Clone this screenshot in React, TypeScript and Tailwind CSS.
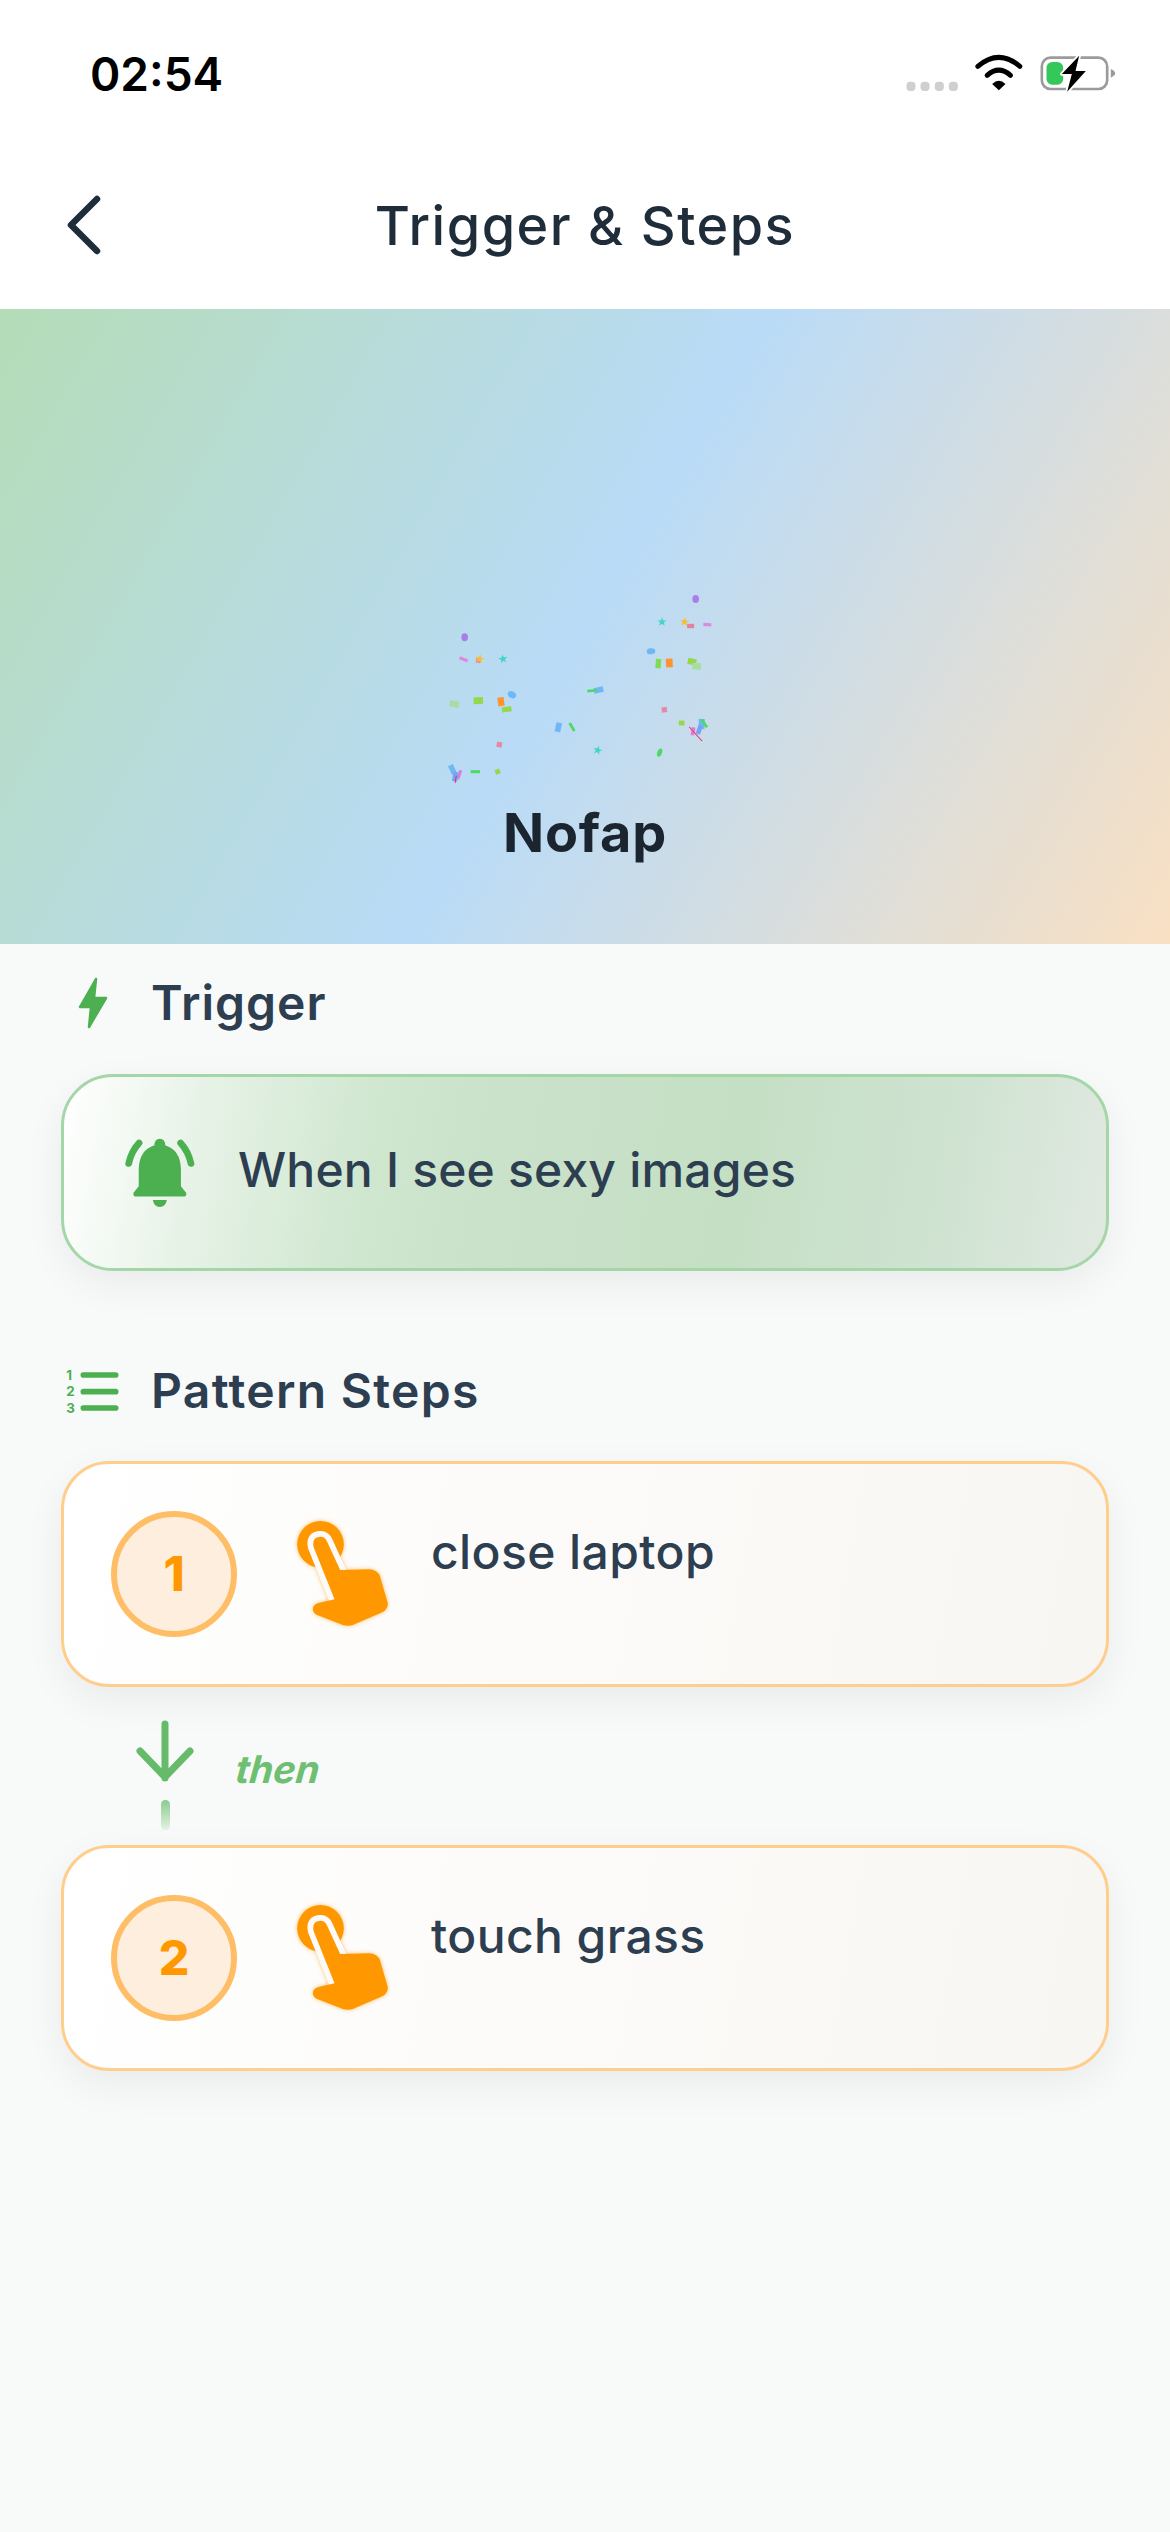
import React from "react";

const inter = "font-['Inter','Noto_Sans',sans-serif]";

// status bar icons: dots, wifi, charging battery
const StatusIcons = () => (
  <svg width="217" height="40" viewBox="70 40 650 120" fill="none">
    {[80, 122, 165, 207].map((x) => (
      <rect key={x} x={x} y="126" width="27" height="28" rx="11" fill="#cfcfcf" />
    ))}
    <path d="M294 80 Q357 26 420 80" stroke="#000" strokeWidth="15" strokeLinecap="round" />
    <path d="M322 107 Q357 76 392 107" stroke="#000" strokeWidth="15" strokeLinecap="round" />
    <path d="M337 133 Q357 114 377 133 L357 152 Z" fill="#000" />
    <rect x="486" y="54" width="196" height="94" rx="26" stroke="#9b9b9b" strokeWidth="8" />
    <path d="M693 88 Q706 94 706 101 Q706 108 693 114 Z" fill="#9b9b9b" />
    <rect x="500" y="67" width="50" height="68" rx="17" fill="#34c759" />
    <path d="M598 48 L546 103 L576 103 L562 156 L618 94 L587 94 Z" fill="#000" stroke="#fff" strokeWidth="11" strokeLinejoin="round" paintOrder="stroke" />
  </svg>
);

const Chevron = () => (
  <svg width="36" height="60" viewBox="0 0 36 60" fill="none">
    <path d="M31 4 L5 30 L31 56" stroke="#1f2d3a" strokeWidth="6.5" strokeLinecap="round" strokeLinejoin="round" />
  </svg>
);

// confetti specks, coordinates are 3x of the real pixels
const Confetti = () => {
  const rects: [number, number, number, number, number, string][] = [
    [131, 268, 26, 10, 22, "#dc8ae0"],
    [175, 272, 14, 14, 10, "#e88aa8"],
    [103, 402, 28, 18, 12, "#a9dca0"],
    [175, 392, 28, 20, -3, "#93d94a"],
    [243, 395, 19, 26, -8, "#ff9330"],
    [260, 418, 29, 15, -8, "#93d94a"],
    [238, 524, 16, 16, 10, "#e58aa6"],
    [415, 472, 17, 28, 12, "#6fb8f5"],
    [456, 471, 8, 28, -30, "#4cd964"],
    [536, 360, 28, 17, -12, "#6fb8f5"],
    [516, 362, 28, 8, -5, "#4cd964"],
    [166, 605, 28, 9, 0, "#4cd964"],
    [233, 605, 15, 15, -20, "#93d94a"],
    [97, 598, 16, 28, -25, "#6fb8f5"],
    [118, 614, 9, 28, 18, "#dc7ae0"],
    [106, 620, 16, 28, 10, "#7ba4f0"],
    [107, 628, 3, 22, 10, "#d6336c"],
    [812, 168, 21, 13, 0, "#e580a0"],
    [862, 164, 24, 10, 3, "#dc8ae0"],
    [715, 281, 16, 28, 5, "#7fdb4f"],
    [748, 279, 20, 26, -3, "#ff9330"],
    [816, 275, 26, 19, 12, "#93d94a"],
    [830, 289, 26, 20, 4, "#a9dca0"],
    [733, 419, 16, 16, -8, "#e58aa6"],
    [785, 459, 17, 14, 3, "#93d94a"],
    [845, 462, 18, 30, 3, "#6fb8f5"],
    [853, 460, 8, 28, -35, "#4cd964"],
    [838, 479, 14, 28, 20, "#7ba4f0"],
    [819, 484, 11, 24, 10, "#e878d8"],
    [827, 492, 3, 58, -42, "#e0447a"],
  ];
  const ovals: [number, number, number, number, number, string][] = [
    [134, 202, 10, 12, 0, "#a87fe8"],
    [276, 374, 13, 10, 25, "#6fb8f5"],
    [827, 87, 10, 12, 0, "#a87fe8"],
    [693, 244, 13, 9, -5, "#6fb8f5"],
    [719, 548, 7, 13, 20, "#4cd964"],
  ];
  const star = "M0 -14 L3.5 -4.5 L13.5 -4.5 L5.5 1.8 L8.5 11.5 L0 5.5 L-8.5 11.5 L-5.5 1.8 L-13.5 -4.5 L-3.5 -4.5 Z";
  const stars: [number, number, number, string][] = [
    [179, 267, 10, "#f5c030"],
    [249, 267, -10, "#3fd4cc"],
    [533, 541, 15, "#3fd4cc"],
    [726, 156, 0, "#3fd4cc"],
    [794, 156, 8, "#f5c030"],
  ];
  return (
    <svg className="absolute left-[420px] top-[261px]" width="320" height="220" viewBox="0 0 960 660">
      {rects.map(([x, y, w, h, r, c], i) => (
        <rect key={i} x={x - w / 2} y={y - h / 2} width={w} height={h} fill={c} transform={`rotate(${r} ${x} ${y})`} />
      ))}
      {ovals.map(([x, y, rx, ry, r, c], i) => (
        <ellipse key={i} cx={x} cy={y} rx={rx} ry={ry} fill={c} transform={`rotate(${r} ${x} ${y})`} />
      ))}
      {stars.map(([x, y, r, c], i) => (
        <path key={i} d={star} fill={c} transform={`translate(${x} ${y}) rotate(${r})`} />
      ))}
    </svg>
  );
};

const Bolt = () => (
  <svg width="30" height="52" viewBox="0 0 30 52" fill="#4caf50">
    <path d="M18 2 L2 30 L13 30 L11 50 L28 21 L16 21 Z" stroke="#4caf50" strokeWidth="2.5" strokeLinejoin="round" />
  </svg>
);

const BellRing = () => (
  <svg width="72" height="72" viewBox="250 565 215 215" fill="none">
    <path d="M264 644 Q272 608 295 583" stroke="#4caf50" strokeWidth="20" strokeLinecap="round" />
    <path d="M450 644 Q442 608 419 583" stroke="#4caf50" strokeWidth="20" strokeLinecap="round" />
    <path d="M341 590 Q341 570 357 570 Q373 570 373 590 Q418 604 420 660 L420 712 L436 732 Q437 743 428 743 L286 743 Q277 743 278 732 L294 712 L294 660 Q296 604 341 590 Z" fill="#4caf50" />
    <path d="M336 753 L378 753 Q374 774 357 774 Q340 774 336 753 Z" fill="#4caf50" />
  </svg>
);

const ListNumbers = () => (
  <svg width="60" height="54" viewBox="60 70 180 162" fill="none">
    <g stroke="#4caf50" strokeWidth="17" strokeLinecap="round">
      <path d="M127 103 H224" />
      <path d="M127 153 H224" />
      <path d="M127 202 H224" />
    </g>
    <g fill="#4caf50" fontSize="40" fontWeight="700" fontFamily="Inter, sans-serif">
      <text x="76" y="118">1</text>
      <text x="76" y="167">2</text>
      <text x="76" y="216">3</text>
    </g>
  </svg>
);

const TapHand = () => (
  <svg className="drop-shadow-[0_0_2px_#ff980090]" width="92" height="106" viewBox="768 543 275 318" fill="none">
    <circle cx="838" cy="613" r="70" fill="#ff9800" />
    <path d="M817 620 Q810 590 838 590 Q852 590 858 605 L897 690 L900 760 L880 778 Z" fill="#fcfbfa" stroke="#fcfbfa" strokeWidth="34" strokeLinejoin="round" />
    <path d="M817 620 Q812 590 838 590 Q852 590 858 605 L897 690 L985 688 Q1010 690 1017 710 L1040 790 Q1040 808 1025 816 L935 855 Q920 860 905 855 L826 824 Q812 815 816 802 Q820 792 832 789 L880 778 Z" fill="#ff9800" />
  </svg>
);

const DownArrow = () => (
  <svg width="60" height="66" viewBox="0 0 60 66" fill="none">
    <path d="M30 4 V58 M5 31 L30 57 L55 31" stroke="#66bb6a" strokeWidth="7" strokeLinecap="round" strokeLinejoin="round" />
  </svg>
);

const StepCard = ({ num, label }: { num: number; label: string }) => (
  <div className="flex h-[226px] items-center rounded-[48px] border-[3px] border-[#ffcd8c] bg-[linear-gradient(100deg,#ffffff_0%,#f8f6f2_100%)] pl-[47px] shadow-[0_14px_40px_rgba(0,0,0,0.06)]">
    {/* number badge */}
    <div className="flex h-[126px] w-[126px] items-center justify-center rounded-full border-[6px] border-[#ffbe66] bg-[#fdeedd] text-[48px] font-extrabold text-[#ff9800]">
      {num}
    </div>
    <div className="ml-[60px]">
      <TapHand />
    </div>
    <p className="ml-[42px] mb-[44px] self-center text-[48px] font-medium leading-[56px] tracking-[0.4px] text-[#2c3e50]">
      {label}
    </p>
  </div>
);

const App = () => {
  return (
    <div className={`${inter} min-h-[2532px] bg-[#f8f9f9]`}>
      {/* Status bar and nav */}
      <div className="flex h-[309px] flex-col bg-white">
        <div className="flex h-[187px] items-start justify-between pl-[90px] pr-[50px]">
          <span className="mt-[47px] text-[46px] font-semibold leading-[54px] text-black">02:54</span>
          <div className="mt-[53px]">
            <StatusIcons />
          </div>
        </div>
        <div className="relative flex h-[78px] items-center justify-center">
          <div className="absolute left-[66px] top-[8px]">
            <Chevron />
          </div>
          <h1 className="text-[54px] font-medium leading-[64px] tracking-[1.5px] text-[#1f2d3a]">Trigger &amp; Steps</h1>
        </div>
      </div>

      {/* Hero */}
      <div className="relative flex h-[635px] flex-col items-center justify-end bg-[linear-gradient(120deg,#b5dcb7_0%,#b9dbf7_50%,#f9e0c3_100%)] pb-[79px]">
        <Confetti />
        <h2 className="text-[54px] font-bold leading-[64px] tracking-[0.8px] text-[#1a2530]">Nofap</h2>
      </div>

      {/* Trigger */}
      <div className="px-[61px]">
        <div className="mt-[33px] flex h-[52px] items-center">
          <div className="ml-[17px] w-[73px]">
            <Bolt />
          </div>
          <h3 className="text-[48px] font-semibold leading-[52px] tracking-[1px] text-[#2c3e50]">Trigger</h3>
        </div>
        <div className="mt-[45px] flex h-[197px] items-center rounded-[52px] border-[3px] border-[#a5d6a7] bg-[linear-gradient(100deg,#ffffff_0%,#e6f2e6_14%,#cfe6cf_30%,#c8e1c8_45%,#c5dfc5_65%,#d0e3d2_85%,#e1e9e1_100%)] pl-[60px] shadow-[0_14px_40px_rgba(0,0,0,0.06)]">
          <BellRing />
          <p className="mb-[6px] ml-[42px] text-[48px] font-medium leading-[56px] tracking-[0.2px] text-[#2c3e50]">When I see sexy images</p>
        </div>

        {/* Pattern steps */}
        <div className="mt-[93px] flex h-[54px] items-center">
          <div className="w-[90px]">
            <ListNumbers />
          </div>
          <h3 className="text-[48px] font-semibold leading-[52px] tracking-[1.3px] text-[#2c3e50]">Pattern Steps</h3>
        </div>
        <div className="mt-[43px]">
          <StepCard num={1} label="close laptop" />
          <div className="flex h-[158px] pl-[74px] pt-[33px]">
            <div className="flex w-[60px] flex-col items-center">
              <DownArrow />
              <div className="mt-[14px] h-[30px] w-[9px] rounded-full bg-[linear-gradient(180deg,#8ccb8f,#e4f2e4)]" />
            </div>
            <span className="ml-[41px] mt-[27px] inline-block h-[44px] -skew-x-6 text-[38px] font-bold italic leading-[44px] text-[#6fbf73]">then</span>
          </div>
          <StepCard num={2} label="touch grass" />
        </div>
      </div>
    </div>
  );
};

export default App;
